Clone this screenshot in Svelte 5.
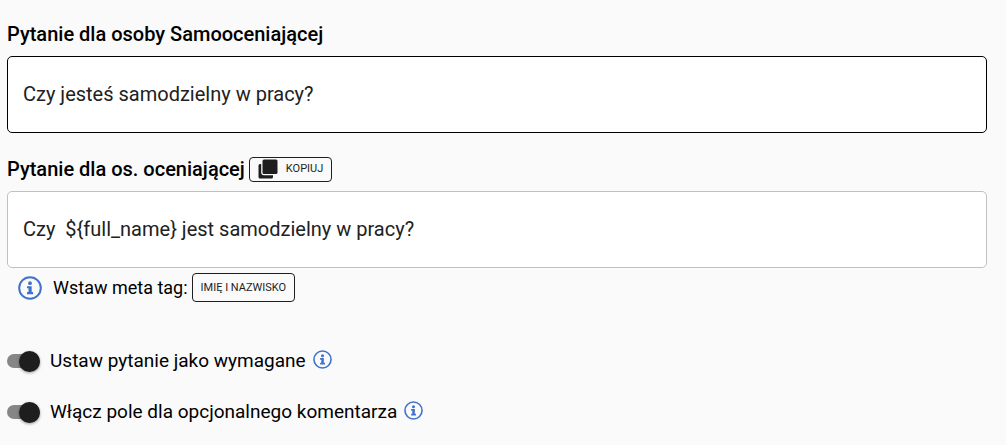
<script lang="ts">
  let selfQuestion = $state("Czy jesteś samodzielny w pracy?");
  let raterQuestion = $state("Czy  ${full_name} jest samodzielny w pracy?");
  let required = $state(true);
  let commentEnabled = $state(true);

  function copyQuestion() {
    raterQuestion = selfQuestion;
  }

  function insertTag() {
    raterQuestion += "${full_name}";
  }
</script>

{#snippet infoIcon()}
  <svg class="info" viewBox="0 0 24 24" aria-hidden="true">
    <circle cx="12" cy="12" r="10.8" />
    <circle class="fill" cx="12" cy="7.2" r="1.9" />
    <path class="fill" d="M9 10.200h4.700v5.800h1.400v2.200H9v-2.200h1.500v-3.700H9z" />
  </svg>
{/snippet}

<form class="question-form">
  <div class="heading">
    <label for="self-question">Pytanie dla osoby Samooceniającej</label>
  </div>
  <textarea id="self-question" class="active" rows="1" bind:value={selfQuestion}
  ></textarea>

  <div class="heading second">
    <label for="rater-question">Pytanie dla os. oceniającej</label>
    <button type="button" class="copy" onclick={copyQuestion}>
      <svg viewBox="0 0 20 20" aria-hidden="true">
        <path
          d="M6 0.5h12a1.5 1.5 0 0 1 1.5 1.5v11.5a1.5 1.5 0 0 1-1.5 1.5H6a1.5 1.5 0 0 1-1.5-1.5V2A1.5 1.5 0 0 1 6 0.5z"
        />
        <path
          d="M3.2 5H2A1.5 1.5 0 0 0 .5 6.5V18A1.5 1.5 0 0 0 2 19.5h11.5A1.5 1.5 0 0 0 15 18v-1.7H6A2.8 2.8 0 0 1 3.2 13.5z"
        />
      </svg>
      KOPIUJ
    </button>
  </div>
  <textarea id="rater-question" rows="1" bind:value={raterQuestion}></textarea>

  <div class="meta">
    {@render infoIcon()}
    <span>Wstaw meta tag:</span>
    <button type="button" onclick={insertTag}>IMIĘ I NAZWISKO</button>
  </div>

  <div class="switches">
    <label class="switch">
      <input type="checkbox" role="switch" bind:checked={required} />
      <span>Ustaw pytanie jako wymagane</span>
      {@render infoIcon()}
    </label>
    <label class="switch">
      <input type="checkbox" role="switch" bind:checked={commentEnabled} />
      <span>Włącz pole dla opcjonalnego komentarza</span>
      {@render infoIcon()}
    </label>
  </div>
</form>

<style>
  :global(body) {
    background: #fafafa;
  }
  .question-form {
    padding: 20px 19px 20px 7px;
    font-family: Roboto, sans-serif;
    font-size: 20px;
    line-height: 28px;
    color: #000;
  }
  .heading {
    display: flex;
    align-items: center;
    gap: 4px;
    margin-bottom: 8px;
    font-weight: 500;
  }
  .second {
    margin-top: 22px;
  }
  textarea {
    display: block;
    box-sizing: border-box;
    width: 100%;
    padding: 24px 15px;
    border: 1px solid #c0c0c0;
    border-radius: 5px;
    background: #fff;
    color: #212121;
    font: inherit;
    line-height: 27px;
    resize: none;
    overflow: hidden;
    outline: none;
  }
  textarea.active {
    border-color: #000;
  }
  button {
    display: flex;
    align-items: center;
    height: 29px;
    padding: 0 8px;
    border: 1px solid #1e1e1e;
    border-radius: 4px;
    background: transparent;
    color: #1e1e1e;
    font-family: inherit;
    font-size: 11px;
    line-height: 20px;
    cursor: pointer;
  }
  .copy {
    gap: 8px;
    height: 25px;
  }
  .copy svg {
    width: 20px;
    height: 20px;
    fill: #1e1e1e;
  }
  .info {
    flex: none;
    width: 19px;
    height: 19px;
    fill: none;
    stroke: #3f72cc;
    stroke-width: 2;
  }
  .info .fill {
    fill: #3f72cc;
    stroke: none;
  }
  .meta {
    display: flex;
    align-items: center;
    margin: 5px 0 0 11px;
    font-size: 18px;
  }
  .meta .info {
    width: 24px;
    height: 24px;
    margin-right: 11px;
  }
  .meta button {
    margin-left: 4px;
  }
  .switches {
    display: grid;
    justify-items: start;
    gap: 23px;
    margin-top: 45px;
    font-size: 19px;
  }
  .switch {
    display: flex;
    align-items: center;
    cursor: pointer;
  }
  .switch .info {
    margin: 0 0 4px 7px;
  }
  input {
    appearance: none;
    display: flex;
    align-items: center;
    width: 33px;
    height: 14px;
    margin: 0 10px 0 0;
    border-radius: 7px;
    background: #868686;
    cursor: pointer;
  }
  input::before {
    content: "";
    width: 21px;
    height: 21px;
    flex: none;
    border-radius: 50%;
    background: #1e1e1e;
    box-shadow: 0 1px 3px rgba(0, 0, 0, 0.4);
  }
  input:checked {
    justify-content: flex-end;
  }
</style>
